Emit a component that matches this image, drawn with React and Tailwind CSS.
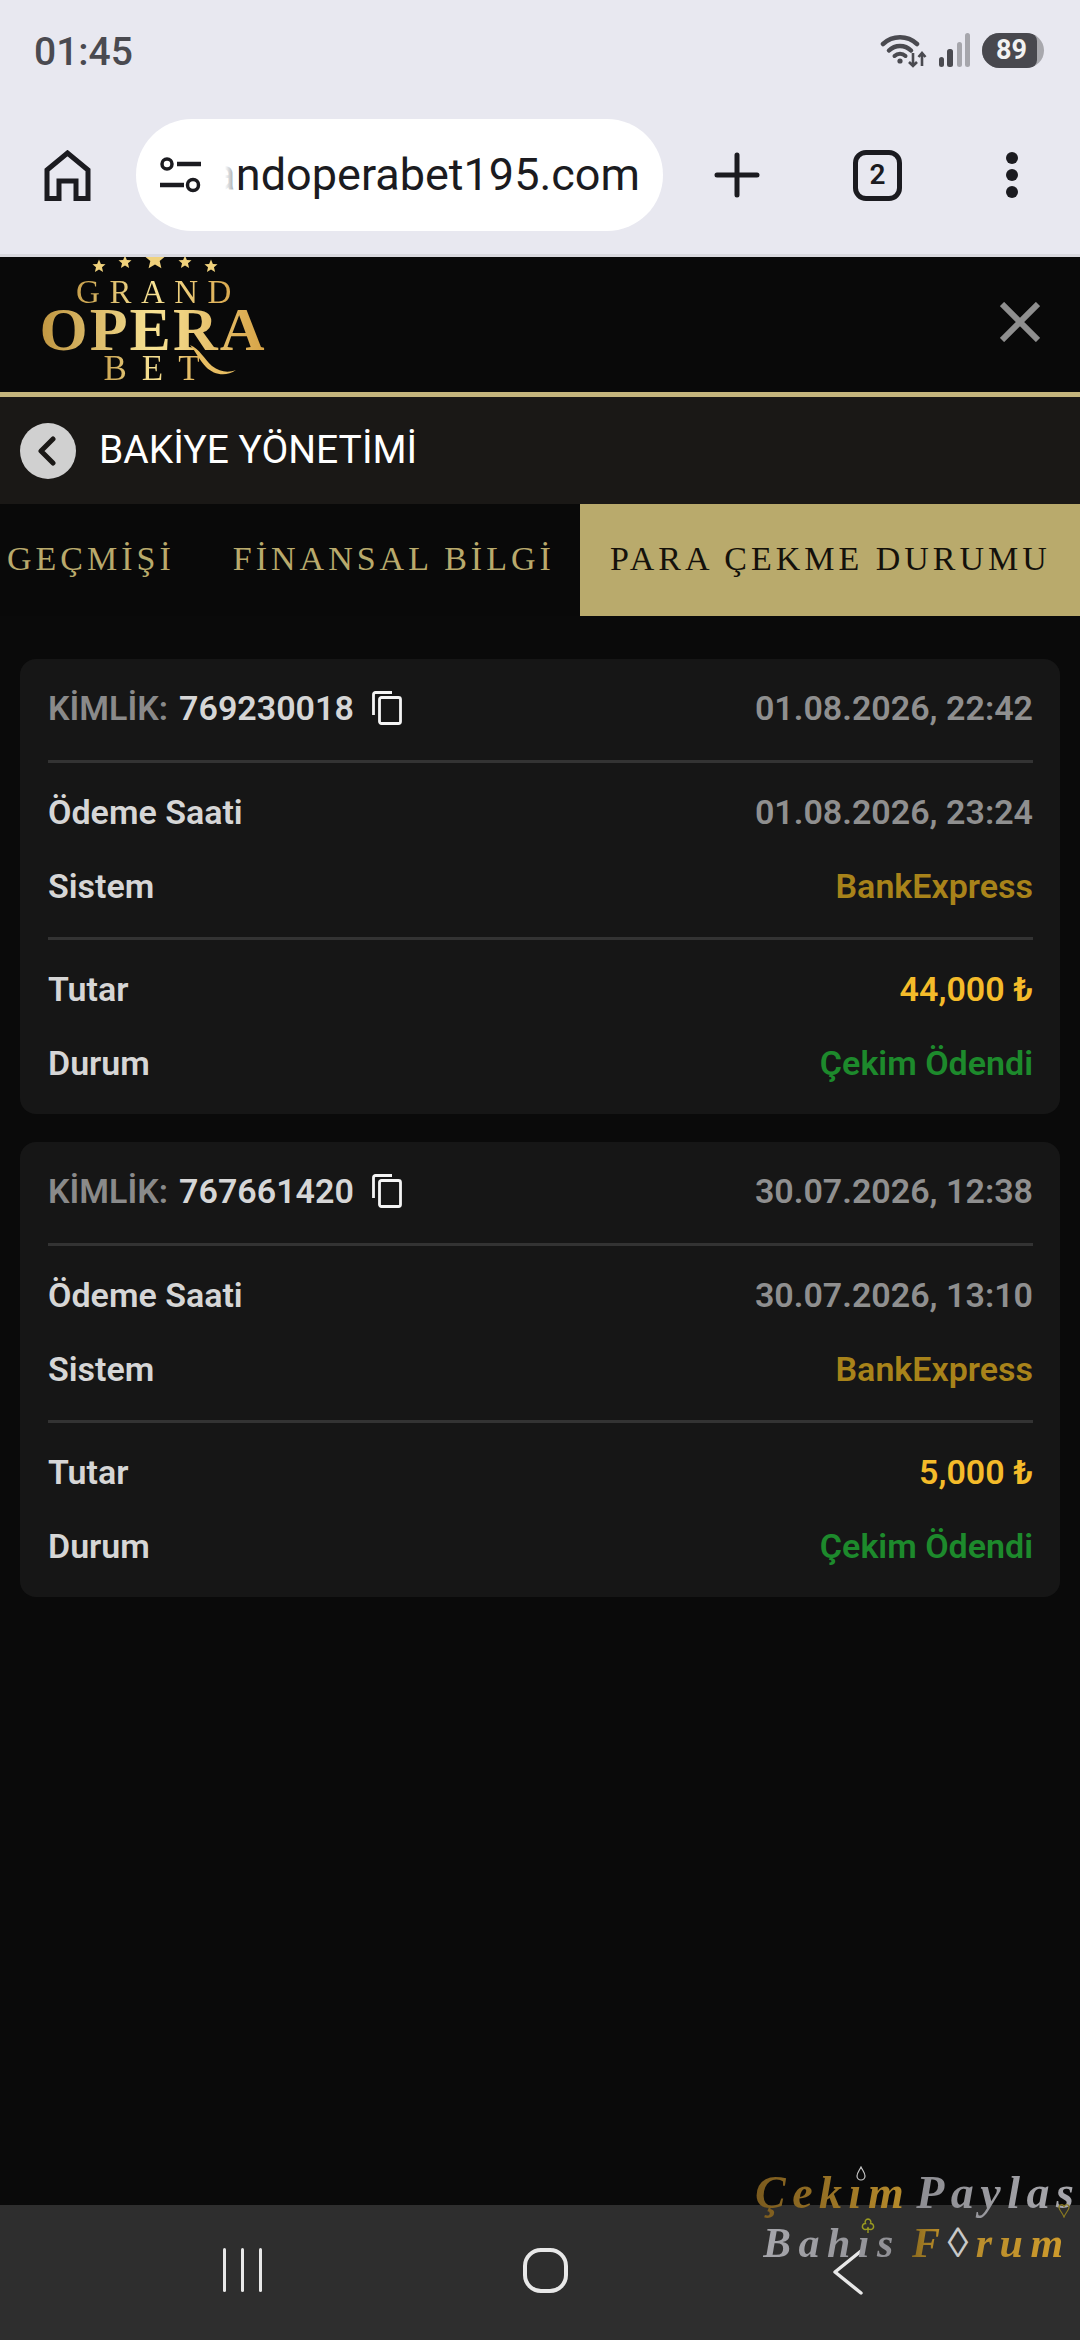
const serif = "font-['Liberation_Serif',serif]";

const gold = "bg-linear-to-r from-[#c09640] via-[#f7e294] to-[#d6a244] bg-clip-text text-transparent";

const Star = ({ size }) => (
  <svg width={size} height={size} viewBox="0 0 24 24">
    <path d="M12 1l3.2 7.4 8 .7-6.1 5.2 1.9 7.9L12 18l-7 4.2 1.9-7.9L.8 9.1l8-.7z" fill="#f0d27c" />
  </svg>
);

const StatusBar = () => (
  <div className="flex h-[104px] items-center justify-between pl-[34px] pr-[36px]">
    <span className="text-[39px] font-medium leading-none text-[#4a4a50]">01:45</span>
    <div className="mt-[-3px] flex items-center">
      <svg width="48" height="36" viewBox="0 0 48 36" fill="none" stroke="#4a4a50">
        <path d="M3 11A25 25 0 0 1 37 11" strokeWidth="4.5" strokeLinecap="round" />
        <path d="M9 17.5A15.5 15.5 0 0 1 31 17.5" strokeWidth="4.5" strokeLinecap="round" />
        <path d="M14.5 23A8 8 0 0 1 25.5 23" strokeWidth="4" strokeLinecap="round" />
        <circle cx="20" cy="28" r="2.6" fill="#4a4a50" stroke="none" />
        <path d="M33 20v13M29 29l4 4 4-4" strokeWidth="2.6" />
        <path d="M42 33V20M38.5 24l3.5-4 3.5 4" strokeWidth="2.6" />
      </svg>
      <svg className="ml-[11px]" width="32" height="35" viewBox="0 0 32 35">
        <rect x="0" y="24" width="5" height="10" rx="2.5" fill="#4a4a50" />
        <rect x="8" y="16" width="6" height="18" rx="2.5" fill="#4a4a50" />
        <rect x="18" y="9" width="5" height="25" rx="2.5" fill="#a6a6ac" />
        <rect x="26" y="0" width="5" height="34" rx="2.5" fill="#a6a6ac" />
      </svg>
      <div className="ml-[11px] h-[35px] w-[62px] overflow-hidden rounded-full bg-[#a8a8ad]">
        <div className="flex h-full w-[55px] items-center justify-center rounded-r-[8px] bg-[#48484e] pl-[4px] text-[27px] font-bold leading-none text-[#f2f2f2]">
          89
        </div>
      </div>
    </div>
  </div>
);

const Toolbar = () => (
  <div className="mt-[15px] flex h-[112px] items-center">
    <svg className="ml-[44px] shrink-0" width="47" height="51" viewBox="0 0 47 51" fill="none" stroke="#1b1b20" strokeWidth="5">
      <path d="M3 48.5V20L23.5 3 44 20v28.500H32V31H15v17.500z" />
    </svg>
    <div className="ml-[45px] flex h-[112px] w-[527px] shrink-0 items-center rounded-full bg-white pl-[24px] pr-[23px]">
      <svg className="shrink-0" width="41" height="36" viewBox="0 0 41 36" fill="none" stroke="#1b1b20">
        <circle cx="7" cy="7" r="5" strokeWidth="3.5" />
        <path d="M17 7h24" strokeWidth="4.500" />
        <path d="M0 28h24" strokeWidth="4.500" />
        <circle cx="33" cy="28" r="5.500" strokeWidth="3.500" />
      </svg>
      <div className="relative ml-[24px] flex min-w-0 flex-1 justify-end overflow-hidden">
        <span className="whitespace-nowrap text-[45px] leading-[56px] text-[#1b1b20]">grandoperabet195.com</span>
        <div className="absolute inset-y-0 left-0 w-[14px] bg-linear-to-r from-white to-white/40"></div>
      </div>
    </div>
    <svg className="ml-[51px] shrink-0" width="46" height="46" viewBox="0 0 46 46" stroke="#1b1b20" strokeWidth="5" strokeLinecap="round">
      <path d="M23 3v40M3 23h40" />
    </svg>
    <div className="ml-[93px] flex h-[51px] w-[49px] shrink-0 items-center justify-center rounded-[13px] border-[5px] border-[#1b1b20] text-[28px] font-semibold leading-none text-[#1b1b20]">
      2
    </div>
    <div className="ml-[104px] flex shrink-0 flex-col gap-[5px]">
      <div className="h-[12px] w-[12px] rounded-full bg-[#1b1b20]"></div>
      <div className="h-[12px] w-[12px] rounded-full bg-[#1b1b20]"></div>
      <div className="h-[12px] w-[12px] rounded-full bg-[#1b1b20]"></div>
    </div>
  </div>
);

const Logo = () => (
  <div className={`relative ml-[40px] flex w-[226px] flex-col items-center ${serif}`}>
    <div className="flex h-[16px] items-end gap-[12px] overflow-hidden pl-[3px]">
      <div><Star size={14} /></div>
      <div className="mb-[4px]"><Star size={14} /></div>
      <div className="mb-[3px]"><Star size={22} /></div>
      <div className="mb-[4px]"><Star size={14} /></div>
      <div><Star size={14} /></div>
    </div>
    <div className={`mt-[6px] pl-[11px] text-[33px] leading-[27px] tracking-[9.500px] ${gold}`}>GRAND</div>
    <div className={`mt-[1px] whitespace-nowrap text-[62px] font-bold leading-[45px] tracking-[2px] ${gold}`}>OPERA</div>
    <div className={`mt-[3px] pl-[12px] text-[35px] leading-[27px] tracking-[15px] ${gold}`}>BET</div>
    <svg className="absolute left-[150px] top-[88px]" width="50" height="32" viewBox="0 0 50 32" fill="none">
      <path d="M0 0C10 4 14 14 22 21 30 27 38 28 46 25 36 32 24 30 16 22 10 16 6 7 0 0z" fill="#e7bd62" />
    </svg>
  </div>
);

const Header = () => (
  <div className="flex h-[135px] items-start justify-between overflow-hidden bg-[#090909]">
    <Logo />
    <svg className="mr-[40px] mt-[45px]" width="40" height="40" viewBox="0 0 40 40" stroke="#8f8f8f" strokeWidth="6">
      <path d="M2 2l36 36M38 2L2 38" />
    </svg>
  </div>
);

const TitleBar = () => (
  <div className="flex h-[107px] items-center bg-[#1a1816] pl-[20px]">
    <div className="flex h-[56px] w-[56px] items-center justify-center rounded-full bg-[#d0d0d0]">
      <svg className="mr-[3px]" width="20" height="30" viewBox="0 0 20 30" fill="none" stroke="#1a1816" strokeWidth="5" strokeLinecap="round" strokeLinejoin="round">
        <path d="M16 3L4 15l12 12" />
      </svg>
    </div>
    <span className="ml-[23px] text-[39px] leading-none text-white">BAKİYE YÖNETİMİ</span>
  </div>
);

const Tabs = () => (
  <div className={`flex h-[112px] items-center bg-[#090909] text-[34px] tracking-[4px] ${serif}`}>
    <span className="mb-[3px] ml-[7px] text-[#b9aa6c]">GEÇMİŞİ</span>
    <span className="mb-[3px] ml-[58px] text-[#b9aa6c]">FİNANSAL BİLGİ</span>
    <div className="ml-auto flex h-full w-[500px] items-center bg-[#b9aa6c] pb-[3px] pl-[30px] text-[#14110b]">
      PARA ÇEKME DURUMU
    </div>
  </div>
);

const CopyIcon = () => (
  <svg className="ml-[18px]" width="30" height="34" viewBox="0 0 30 34" fill="none" stroke="#f4f4f4" strokeWidth="2.800">
    <rect x="7.500" y="6.500" width="21" height="26" rx="2" />
    <path d="M1.500 24V3.500a2 2 0 0 1 2-2H20" />
  </svg>
);

const Row = ({ label, children }) => (
  <div className="flex h-[74px] items-center justify-between">
    <span className="text-[#d6d6d6]">{label}</span>
    {children}
  </div>
);

const Card = ({ item }) => (
  <div className="rounded-[16px] bg-[#161616] pl-[28px] pr-[27px] text-[34px] font-semibold leading-none">
    <div className="flex h-[101px] items-start justify-between pt-[32px]">
      <div className="flex items-center">
        <span className="text-[#8a8a8a]">KİMLİK:</span>
        <span className="ml-[11px] text-[#d6d6d6]">{item.id}</span>
        <CopyIcon />
      </div>
      <span className="text-[#8f8f8f]">{item.created}</span>
    </div>
    <div className="h-[3px] bg-[#333333]"></div>
    <div className="pt-[12px] pb-[14px]">
      <Row label="Ödeme Saati"><span className="text-[#8f8f8f]">{item.paid}</span></Row>
      <Row label="Sistem"><span className="text-[#a8831a]">BankExpress</span></Row>
    </div>
    <div className="h-[3px] bg-[#333333]"></div>
    <div className="pt-[12px] pb-[14px]">
      <Row label="Tutar"><span className="text-[#f4bb2a]">{item.amount} ₺</span></Row>
      <Row label="Durum"><span className="text-[#1d8a2c]">Çekim Ödendi</span></Row>
    </div>
  </div>
);

const Watermark = () => (
  <div className={`absolute bottom-[74px] right-0 w-[325px] overflow-hidden pt-[14px] italic font-bold ${serif}`}>
    <div className="relative whitespace-nowrap text-[46px] leading-[54px] tracking-[6.500px]">
      <span className="bg-linear-to-r from-[#7a5a1e] to-[#b98d2c] bg-clip-text text-transparent">Çekım</span>
      <span className="ml-[6px] bg-linear-to-r from-[#8d8d92] to-[#a9a9ae] bg-clip-text text-transparent">Paylas</span>
      <svg className="absolute left-[100px] top-[0px]" width="12" height="16" viewBox="0 0 12 16" fill="none" stroke="#c8c8c8" strokeWidth="1.200">
        <path d="M6 1C4 5 2 7 2 10a4 4 0 0 0 8 0c0-3-2-5-4-9z" />
      </svg>
      <svg className="absolute left-[303px] top-[38px]" width="12" height="14" viewBox="0 0 12 14" fill="none" stroke="#8a7a20" strokeWidth="1.200">
        <path d="M6 13C4 8 1 6 1 3.500a2.500 2.500 0 0 1 5-.500 2.500 2.500 0 0 1 5 .500C11 6 8 8 6 13z" />
      </svg>
    </div>
    <div className="relative ml-[8px] whitespace-nowrap text-[42px] leading-[46px] tracking-[7.500px]">
      <span className="bg-linear-to-r from-[#a6a6ab] to-[#8f8f94] bg-clip-text text-transparent">Bahıs</span>
      <span className="ml-[11px] bg-linear-to-r from-[#8a6a1f] to-[#c8962a] bg-clip-text text-transparent">F</span>
      <span className="font-normal not-italic text-[#c8c8c8]">◊</span>
      <span className="bg-linear-to-r from-[#b98d2c] to-[#d09c2c] bg-clip-text text-transparent">rum</span>
      <svg className="absolute left-[98px] top-[-2px]" width="14" height="16" viewBox="0 0 14 16" fill="none" stroke="#9a9a20" strokeWidth="1.400">
        <path d="M7 1a3 3 0 0 0-2.500 4.500A3 3 0 1 0 7 10a3 3 0 1 0 2.500-4.500A3 3 0 0 0 7 1zM7 9v6" />
      </svg>
    </div>
  </div>
);

const NavBar = () => (
  <div className="flex h-[135px] shrink-0 items-start bg-[#2e2e2e] pt-[43px]">
    <div className="ml-[223px] flex h-[44px] gap-[15px]">
      <div className="w-[3px] rounded-full bg-[#e8e8e8]"></div>
      <div className="w-[3px] rounded-full bg-[#e8e8e8]"></div>
      <div className="w-[3px] rounded-full bg-[#e8e8e8]"></div>
    </div>
    <div className="ml-[261px] h-[45px] w-[45px] rounded-[18px] border-[4px] border-[#e8e8e8]"></div>
    <svg className="ml-[265px] mt-[1px]" width="30" height="46" viewBox="0 0 30 46" fill="none" stroke="#e8e8e8" strokeWidth="3.500" strokeLinecap="round" strokeLinejoin="round">
      <path d="M28 2L2 23l26 21" />
    </svg>
  </div>
);

const records = [
  { id: "769230018", created: "01.08.2026, 22:42", paid: "01.08.2026, 23:24", amount: "44,000" },
  { id: "767661420", created: "30.07.2026, 12:38", paid: "30.07.2026, 13:10", amount: "5,000" },
];

const App = () => (
  <div className="relative flex h-[2340px] w-[1080px] flex-col overflow-hidden bg-[#0a0a0a] font-['Roboto',sans-serif]">
    <div className="h-[257px] shrink-0 border-b-[3px] border-[#d9d9df] bg-[#e8e8f0]">
      <StatusBar />
      <Toolbar />
    </div>
    <Header />
    <div className="h-[5px] shrink-0 bg-[#c4b47c]"></div>
    <TitleBar />
    <Tabs />
    <div className="flex flex-1 flex-col gap-[28px] px-[20px] pt-[43px]">
      {records.map((item) => (
        <Card key={item.id} item={item} />
      ))}
    </div>
    <NavBar />
    <Watermark />
  </div>
);

export default App;
